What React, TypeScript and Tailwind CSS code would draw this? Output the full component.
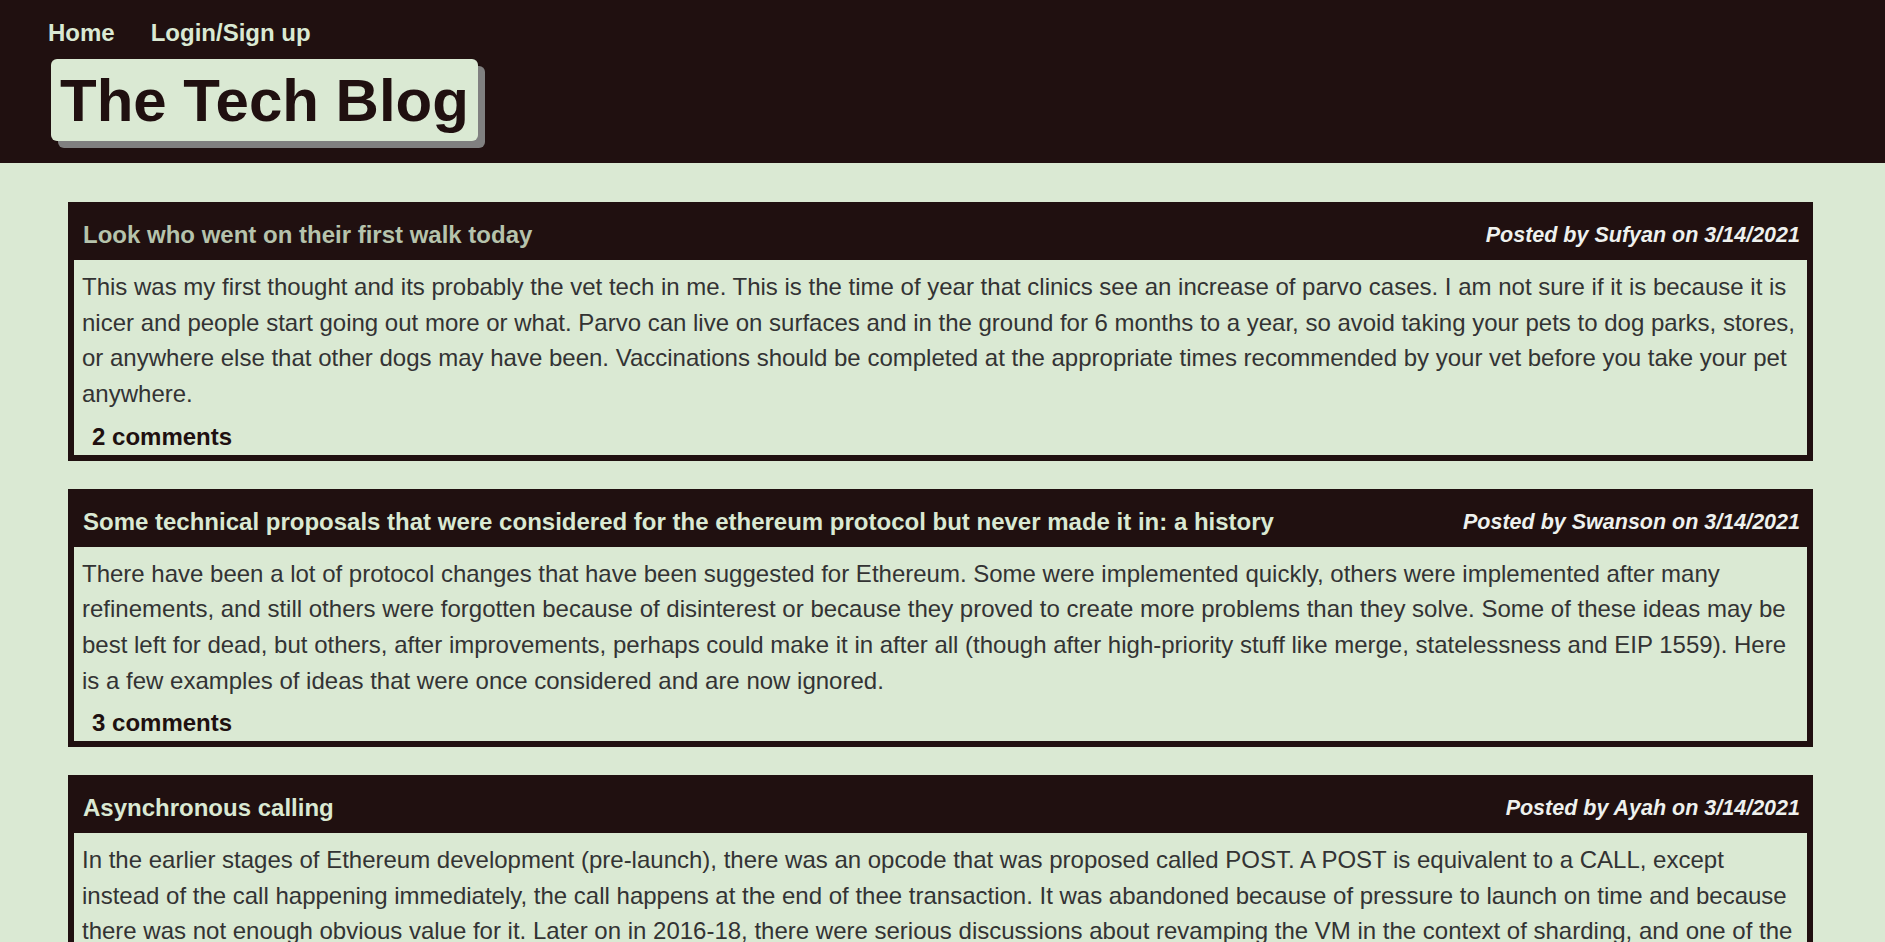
import React from "react";

type Post = {
  title: string;
  author: string;
  date: string;
  body: string;
  comments: number;
  visited?: boolean;
};

const posts: Post[] = [
  {
    title: "Look who went on their first walk today",
    author: "Sufyan",
    date: "3/14/2021",
    body: "This was my first thought and its probably the vet tech in me. This is the time of year that clinics see an increase of parvo cases. I am not sure if it is because it is nicer and people start going out more or what. Parvo can live on surfaces and in the ground for 6 months to a year, so avoid taking your pets to dog parks, stores, or anywhere else that other dogs may have been. Vaccinations should be completed at the appropriate times recommended by your vet before you take your pet anywhere.",
    comments: 2,
    visited: true,
  },
  {
    title: "Some technical proposals that were considered for the ethereum protocol but never made it in: a history",
    author: "Swanson",
    date: "3/14/2021",
    body: "There have been a lot of protocol changes that have been suggested for Ethereum. Some were implemented quickly, others were implemented after many refinements, and still others were forgotten because of disinterest or because they proved to create more problems than they solve. Some of these ideas may be best left for dead, but others, after improvements, perhaps could make it in after all (though after high-priority stuff like merge, statelessness and EIP 1559). Here is a few examples of ideas that were once considered and are now ignored.",
    comments: 3,
  },
  {
    title: "Asynchronous calling",
    author: "Ayah",
    date: "3/14/2021",
    body: "In the earlier stages of Ethereum development (pre-launch), there was an opcode that was proposed called POST. A POST is equivalent to a CALL, except instead of the call happening immediately, the call happens at the end of thee transaction. It was abandoned because of pressure to launch on time and because there was not enough obvious value for it. Later on in 2016-18, there were serious discussions about revamping the VM in the context of sharding, and one of the ideas that came up was asynchronous calling between shards, where a call would be scheduled and only executed in a later block.",
    comments: 1,
  },
];

function PostCard({ post }: { post: Post }) {
  return (
    <div className="bg-[#201010]">
      {/* card header */}
      <div className="flex items-center justify-between gap-6 pl-[15px] pr-[13px] pt-[20px] pb-[12px] leading-[26px]">
        <span className={`text-[24px] font-bold ${post.visited ? "text-[#b6c3ac]" : "text-[#dae9d3]"}`}>
          {post.title}
        </span>
        <span className="shrink-0 text-[21.5px] font-bold italic text-[#eef1ee]">
          Posted by {post.author} on {post.date}
        </span>
      </div>
      <div className="mx-[6px] mb-[6px] bg-[#dae9d3] pt-[9px]">
        <p className="px-[8px] text-[24px] leading-[35.7px] text-[#333333]">{post.body}</p>
        <div className="ml-[18px] mt-[7px] text-[24px] font-bold leading-[35.7px] text-[#201010]">
          {post.comments} comments
        </div>
      </div>
    </div>
  );
}

export default function App() {
  return (
    <div className="min-h-screen bg-[#dae9d3] font-['Liberation_Sans',Arial,sans-serif]">
      <header className="flex flex-col items-start bg-[#201010] pb-[22px] pt-[20px]">
        <nav className="flex gap-[36px] pl-[48px] text-[24px] font-bold leading-[26px] text-[#dae9d3]">
          <a href="#">Home</a>
          <a href="#">Login/Sign up</a>
        </nav>
        <div className="ml-[51px] mt-[13px] rounded-[6px] bg-[#dae9d3] px-[9px] pb-[6px] pt-[7px] shadow-[7px_7px_0_#808080]">
          <h1 className="text-[60px] font-bold leading-[69px] text-[#201010]">The Tech Blog</h1>
        </div>
      </header>
      <main className="ml-[68px] mr-[72px] flex flex-col gap-[28px] pb-[40px] pt-[39px]">
        {posts.map((p) => (
          <PostCard key={p.title} post={p} />
        ))}
      </main>
    </div>
  );
}
